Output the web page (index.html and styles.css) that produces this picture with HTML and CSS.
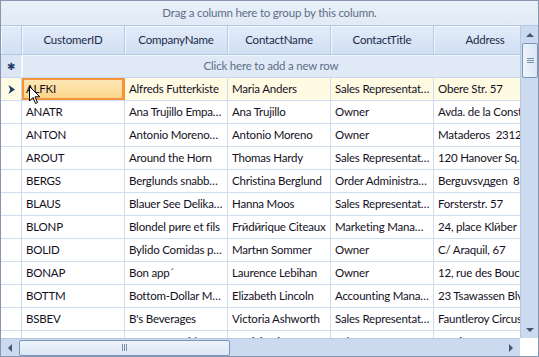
FILE: index.html
```html
<!DOCTYPE html>
<html lang="en">
<head>
  <meta charset="UTF-8" />
  <title>Customers Grid</title>
  <link rel="stylesheet" href="styles.css">
</head>
<body>

  <div class="grid">
    <div class="group-panel">Drag a column here to group by this column.</div>

    <div class="grid-body">
      <div class="viewport">
        <div class="row header">
          <div class="indicator"></div>
          <div class="cell">CustomerID</div>
          <div class="cell">CompanyName</div>
          <div class="cell">ContactName</div>
          <div class="cell">ContactTitle</div>
          <div class="cell">Address</div>
        </div>

        <div class="row new-row">
          <div class="indicator">&#x2731;</div>
          <div class="new-row-text">Click here to add a new row</div>
        </div>

        <div class="row data current">
          <div class="indicator">
            <svg width="7" height="9" viewBox="0 0 7 9"><path d="M0.5 0 L7 4.5 L0.5 9 L2.2 4.5 Z" fill="#1f3a6b"/></svg>
          </div>
          <div class="cell active">ALFKI
            <svg class="cursor" width="12" height="19" viewBox="0 0 12 19"><path d="M0.5 0.5 L0.5 15 L4 11.5 L6.5 17.5 L8.5 16.5 L6 10.8 L10.8 10.8 Z" fill="#fff" stroke="#000" stroke-width="1"/></svg>
          </div>
          <div class="cell">Alfreds Futterkiste</div>
          <div class="cell">Maria Anders</div>
          <div class="cell">Sales Representat…</div>
          <div class="cell">Obere Str. 57</div>
        </div>
        <div class="row data">
          <div class="indicator"></div>
          <div class="cell">ANATR</div>
          <div class="cell">Ana Trujillo Empa…</div>
          <div class="cell">Ana Trujillo</div>
          <div class="cell">Owner</div>
          <div class="cell">Avda. de la Constitución 2222</div>
        </div>
        <div class="row data">
          <div class="indicator"></div>
          <div class="cell">ANTON</div>
          <div class="cell">Antonio Moreno…</div>
          <div class="cell">Antonio Moreno</div>
          <div class="cell">Owner</div>
          <div class="cell">Mataderos&nbsp; 2312</div>
        </div>
        <div class="row data">
          <div class="indicator"></div>
          <div class="cell">AROUT</div>
          <div class="cell">Around the Horn</div>
          <div class="cell">Thomas Hardy</div>
          <div class="cell">Sales Representat…</div>
          <div class="cell">120 Hanover Sq.</div>
        </div>
        <div class="row data">
          <div class="indicator"></div>
          <div class="cell">BERGS</div>
          <div class="cell">Berglunds snabb…</div>
          <div class="cell">Christina Berglund</div>
          <div class="cell">Order Administra…</div>
          <div class="cell">Berguvsvдgen&nbsp; 8</div>
        </div>
        <div class="row data">
          <div class="indicator"></div>
          <div class="cell">BLAUS</div>
          <div class="cell">Blauer See Delika…</div>
          <div class="cell">Hanna Moos</div>
          <div class="cell">Sales Representat…</div>
          <div class="cell">Forsterstr. 57</div>
        </div>
        <div class="row data">
          <div class="indicator"></div>
          <div class="cell">BLONP</div>
          <div class="cell">Blondel pиre et fils</div>
          <div class="cell">Frйdйrique Citeaux</div>
          <div class="cell">Marketing Mana…</div>
          <div class="cell">24, place Klйber</div>
        </div>
        <div class="row data">
          <div class="indicator"></div>
          <div class="cell">BOLID</div>
          <div class="cell">Bylido Comidas p…</div>
          <div class="cell">Martнn Sommer</div>
          <div class="cell">Owner</div>
          <div class="cell">C/ Araquil, 67</div>
        </div>
        <div class="row data">
          <div class="indicator"></div>
          <div class="cell">BONAP</div>
          <div class="cell">Bon app´</div>
          <div class="cell">Laurence Lebihan</div>
          <div class="cell">Owner</div>
          <div class="cell">12, rue des Bouchers</div>
        </div>
        <div class="row data">
          <div class="indicator"></div>
          <div class="cell">BOTTM</div>
          <div class="cell">Bottom-Dollar M…</div>
          <div class="cell">Elizabeth Lincoln</div>
          <div class="cell">Accounting Mana…</div>
          <div class="cell">23 Tsawassen Blvd.</div>
        </div>
        <div class="row data">
          <div class="indicator"></div>
          <div class="cell">BSBEV</div>
          <div class="cell">B's Beverages</div>
          <div class="cell">Victoria Ashworth</div>
          <div class="cell">Sales Representat…</div>
          <div class="cell">Fauntleroy Circus</div>
        </div>
        <div class="row data">
          <div class="indicator"></div>
          <div class="cell">CACTU</div>
          <div class="cell">Cactus Comidas p…</div>
          <div class="cell">Patricio Simpson</div>
          <div class="cell">Sales Agent</div>
          <div class="cell">Cerrito 333</div>
        </div>
      </div>

      <!-- vertical scrollbar -->
      <div class="vscroll">
        <div class="arrow up"></div>
        <div class="vthumb"><span class="grip-h"></span></div>
        <div class="vtrack"></div>
        <div class="arrow down"></div>
      </div>
    </div>

    <div class="hscroll-row">
      <div class="hscroll">
        <div class="arrow left"></div>
        <div class="hthumb"><span class="grip-v"></span></div>
        <div class="htrack"></div>
        <div class="arrow right"></div>
      </div>
      <div class="corner"></div>
    </div>
  </div>

</body>
</html>
```

FILE: styles.css
```css
* {
  box-sizing: border-box;
}

body {
  margin: 0;
  background-color: #ffffff;
  font-family: Lato, 'Open Sans', sans-serif;
  font-size: 11.5px;
  letter-spacing: -0.2px;
}

.grid {
  width: 539px;
  height: 357px;
  border: 1px solid #8796ae;
  display: flex;
  flex-direction: column;
  overflow: hidden;
}

.group-panel {
  height: 25px;
  flex: none;
  background: linear-gradient(#e9f0f9, #e1eaf6);
  border-bottom: 1px solid #b3c7e3;
  color: #5d6e88;
  text-align: center;
  line-height: 24px;
}

.grid-body {
  height: 312px;
  flex: none;
  display: flex;
}

.viewport {
  width: 519px;
  overflow: hidden;
  display: flex;
  flex-direction: column;
}

.row {
  display: flex;
  flex: none;
}

.indicator {
  width: 21px;
  flex: none;
  border-right: 1px solid #c8d7ec;
  display: flex;
  align-items: center;
  justify-content: center;
}

.cell {
  width: 103px;
  flex: none;
  padding-left: 4px;
  white-space: nowrap;
  overflow: hidden;
  border-right: 1px solid #d0ddf0;
}

/* header */
.header {
  height: 29px;
}

.header .indicator,
.header .cell {
  background: linear-gradient(#e2ebf8, #d2e0f4);
  border-bottom: 1px solid #b5c9e5;
  border-right: 1px solid #b8cbe6;
  box-shadow: inset 1px 1px 0 #f3f7fc;
}

.header .cell {
  padding-left: 0;
  text-align: center;
  line-height: 28px;
  color: #1b2a48;
}

/* new row */
.new-row {
  height: 23px;
  background: #e0e9f6;
  border-bottom: 1px solid #c8d7ec;
}

.new-row .indicator {
  color: #1f3a6b;
  font-size: 10px;
  background: #dbe5f4;
  border-right: 1px solid #f3f7fc;
}

.new-row-text {
  flex: 1;
  text-align: center;
  line-height: 22px;
  color: #5d6e88;
  box-shadow: inset 1px 1px 0 #f3f7fc;
}

/* data rows */
.data {
  height: 23px;
}

.data .indicator,
.data .cell {
  border-bottom: 1px solid #d0ddf0;
}

.data .cell {
  line-height: 22px;
  color: #14101e;
}

.current {
  background: #fffbe3;
}

.current .cell.active {
  position: relative;
  overflow: visible;
  background: linear-gradient(#fde9bb, #fbd487);
  box-shadow: inset 0 0 0 2px #f5943c;
  border-right-color: #f5943c;
}

.cursor {
  position: absolute;
  left: 7px;
  top: 8px;
}

/* scrollbars */
.vscroll {
  width: 18px;
  flex: none;
  background: #cbdaef;
  border-left: 1px solid #b5c9e5;
  display: flex;
  flex-direction: column;
  align-items: center;
}

.vtrack,
.htrack {
  flex: 1;
}

.vthumb {
  width: 16px;
  height: 35px;
  margin-left: 1px;
  border: 1px solid #7d96b8;
  border-radius: 2px;
  background: linear-gradient(90deg, #eef3fb, #dce7f6);
  display: flex;
  align-items: center;
  justify-content: center;
}

.grip-h {
  width: 7px;
  height: 5px;
  border-top: 1px solid #7d8fa8;
  border-bottom: 1px solid #7d8fa8;
  position: relative;
}

.grip-h::after {
  content: "";
  position: absolute;
  left: 0;
  right: 0;
  top: 1px;
  border-top: 1px solid #7d8fa8;
}

.arrow {
  width: 18px;
  height: 17px;
  flex: none;
  display: flex;
  align-items: center;
  justify-content: center;
}

.arrow::before {
  content: "";
  border: 4px solid transparent;
}

.arrow.up::before {
  border-top: none;
  border-bottom: 4px solid #46566e;
}

.arrow.down::before {
  border-bottom: none;
  border-top: 4px solid #46566e;
}

.arrow.left::before {
  border-left: none;
  border-right: 4px solid #46566e;
}

.arrow.right::before {
  border-right: none;
  border-left: 4px solid #46566e;
}

.hscroll-row {
  height: 18px;
  flex: none;
  display: flex;
}

.hscroll {
  width: 519px;
  background: #cbdaef;
  border-top: 1px solid #b5c9e5;
  display: flex;
  align-items: center;
}

.hthumb {
  width: 211px;
  height: 16px;
  border: 1px solid #7d96b8;
  border-radius: 2px;
  background: linear-gradient(#eef3fb, #dce7f6);
  display: flex;
  align-items: center;
  justify-content: center;
}

.grip-v {
  width: 5px;
  height: 7px;
  border-left: 1px solid #7d8fa8;
  border-right: 1px solid #7d8fa8;
  position: relative;
}

.grip-v::after {
  content: "";
  position: absolute;
  top: 0;
  bottom: 0;
  left: 1px;
  border-left: 1px solid #7d8fa8;
}

.corner {
  flex: 1;
  background: #ffffff;
}
```
